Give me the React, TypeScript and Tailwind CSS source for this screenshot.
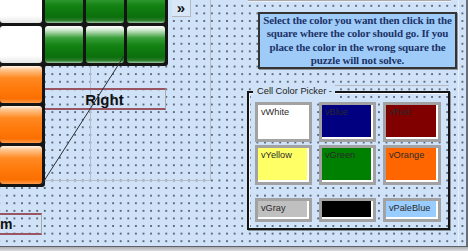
import React from 'react';

const canvasBg =
  'bg-[#cfe2f7] bg-[radial-gradient(circle,#5d6a7a_0.7px,transparent_1.1px)] bg-[length:7.6px_7.6px] bg-[position:3px_2px]';

const greenCell =
  'rounded-[3px] bg-[linear-gradient(to_bottom,#ffffff_0%,#d6ecd6_10%,#3a9f3a_32%,#138313_52%,#0b6f0b_84%,#2c7d2c_93%,#9cc99c_100%)]';
const orangeCell =
  'rounded-[3px] bg-[linear-gradient(to_bottom,#fff3e6_0%,#ffc58e_10%,#ff8a22_32%,#ff7a0c_60%,#fa6f00_88%,#ff9a4a_100%)]';
const whiteCell = 'rounded-[3px] bg-[linear-gradient(to_bottom,#ffffff_0%,#ffffff_80%,#e6e6e6_100%)]';

const colorButtons = [
  { label: 'vWhite', fill: 'bg-white', h: 'h-[40px]' },
  { label: 'vBlue', fill: 'bg-[#000080]', h: 'h-[40px]' },
  { label: 'vRed', fill: 'bg-[#800000]', h: 'h-[40px]' },
  { label: 'vYellow', fill: 'bg-[#ffff66]', h: 'h-[40px]' },
  { label: 'vGreen', fill: 'bg-[#008000]', h: 'h-[40px]' },
  { label: 'vOrange', fill: 'bg-[#ff6600]', h: 'h-[40px]' },
  { label: 'vGray', fill: 'bg-[#c0c0c0]', h: 'h-[24px]' },
  { label: '', fill: 'bg-black', h: 'h-[24px]' },
  { label: 'vPaleBlue', fill: 'bg-[#99ccff]', h: 'h-[24px]' },
];

function ColorButton({ label, fill, h }: { label: string; fill: string; h: string }) {
  return (
    <div className={`${h} border-[3px] border-[#a2a2a2] flex`}>
      <div className={`flex-1 ${fill} border-r-2 border-b-2 border-white px-[3px] pt-[1px] text-[9.2px] leading-[12px] text-[#2a2a2a]`}>
        {label}
      </div>
    </div>
  );
}

export default function App() {
  return (
    <div
      className={`relative w-[468px] h-[251px] overflow-hidden ${canvasBg}`}
      style={{ fontFamily: '"Liberation Sans", Arial, sans-serif' }}
    >
      {/* outline of the subform area */}
      <div className="absolute left-[42px] top-[-2px] w-[169px] h-[183px] border-r border-b border-[#b7bec7]" />
      <div className="absolute left-[90px] top-[60px] w-px h-[120px] bg-[#b7bec7]" />

      {/* Right label */}
      <div className="absolute left-[42px] top-[88px] w-[124px] h-[22px] border-t-2 border-b-2 border-[#9a5563] border-r border-r-[#a9a9b0] flex items-center justify-center">
        <span className="text-[15px] font-bold text-[#111] leading-none pl-[2px]">Right</span>
      </div>

      {/* puzzle cells */}
      <div className="absolute left-[-3px] top-[-17px] flex items-start">
        <div className="flex flex-col gap-[3px] bg-[#151515] p-[3px] rounded-[3px]">
          <div className={`w-[42px] h-[37px] ${whiteCell}`} />
          <div className={`w-[42px] h-[37px] ${whiteCell}`} />
          <div className={`w-[42px] h-[37px] ${orangeCell}`} />
          <div className={`w-[42px] h-[37px] ${orangeCell}`} />
          <div className={`w-[42px] h-[38px] ${orangeCell}`} />
        </div>
        <div className="grid grid-cols-[38px_38px_38px] grid-rows-[37px_37px] gap-[3px] bg-[#151515] py-[3px] pr-[3px] rounded-br-[3px]">
          {Array.from({ length: 6 }).map((_, i) => (
            <div key={i} className={greenCell} />
          ))}
        </div>
      </div>

      {/* connector line */}
      <svg className="absolute left-0 top-0" width="468" height="251">
        <line x1="124" y1="56" x2="42" y2="184" stroke="#2b2f36" strokeWidth="1" />
      </svg>

      {/* bottom label */}
      <div className="absolute left-0 top-[213px] w-[42px] h-[22px] border-t-2 border-b-2 border-[#9a5563] border-r border-r-[#a9a9b0] flex items-center">
        <span className="text-[14px] font-bold text-[#111] leading-none">m</span>
      </div>

      {/* expand button */}
      <div className="absolute left-[172px] top-0 w-[19px] h-[17px] bg-[#d9e8f8] border-r border-b border-[#b3b8bf] flex items-center justify-center">
        <span className="text-[15px] font-bold leading-none text-[#111] -mt-[2px]">»</span>
      </div>

      {/* control above instructions */}
      <div className="absolute left-[248px] top-[-2px] w-[203px] h-[4px] bg-[#a9abae] border-b border-[#eef2f6]" />
      <div className="absolute left-[458px] top-0 w-px h-[246px] bg-[#e9f0f8]" />

      {/* instructions */}
      <div className="absolute left-[258px] top-[12px] w-[199px] h-[57px] border-2 border-[#343434] bg-[#9fcbf9] shadow-[1px_1px_0_#8d939b] flex items-center justify-center">
        <p
          className="text-center whitespace-nowrap text-[11px] leading-[13.4px] font-bold text-[#1c3367] tracking-[-0.15px]"
          style={{ fontFamily: '"Liberation Serif", "Times New Roman", serif' }}
        >
          Select the color you want then click in the
          <br />
          square where the color should go. If you
          <br />
          place the color in the wrong square the
          <br />
          puzzle will not solve.
        </p>
      </div>

      {/* option group frame */}
      <div className="absolute left-[247px] top-[91px] w-[203px] h-[139px] border-2 border-[#141414] shadow-[1px_1px_0_#8d939b,inset_1px_1px_0_#f2f6fb]">
        <div className="grid grid-cols-[57px_57px_58px] gap-x-[7px] gap-y-[3px] ml-[6px] mt-[9px]">
          {colorButtons.slice(0, 6).map((b) => (
            <ColorButton key={b.label} {...b} />
          ))}
        </div>
        <div className="grid grid-cols-[57px_57px_58px] gap-x-[7px] ml-[6px] mt-[13px]">
          {colorButtons.slice(6).map((b, i) => (
            <ColorButton key={i} {...b} />
          ))}
        </div>
      </div>
      <div className="absolute left-[257px] top-[85px] w-[192px] h-[14px] border-t border-[#b3bac3]" />
      <div className="absolute left-[253px] top-[85px] h-[13px] pl-[4px] pr-[3px] bg-[#cfe2f7] text-[9.3px] leading-[13px] text-[#222]">
        Cell Color Picker -
      </div>

      {/* window edges */}
      <div className="absolute right-0 top-0 w-[2px] h-full bg-[#6a6d72]" />
      <div className="absolute left-0 bottom-0 w-full h-[5px] border-t border-[#5e6166] bg-[linear-gradient(to_bottom,#a9acb0,#dcdee0)]" />
    </div>
  );
}
